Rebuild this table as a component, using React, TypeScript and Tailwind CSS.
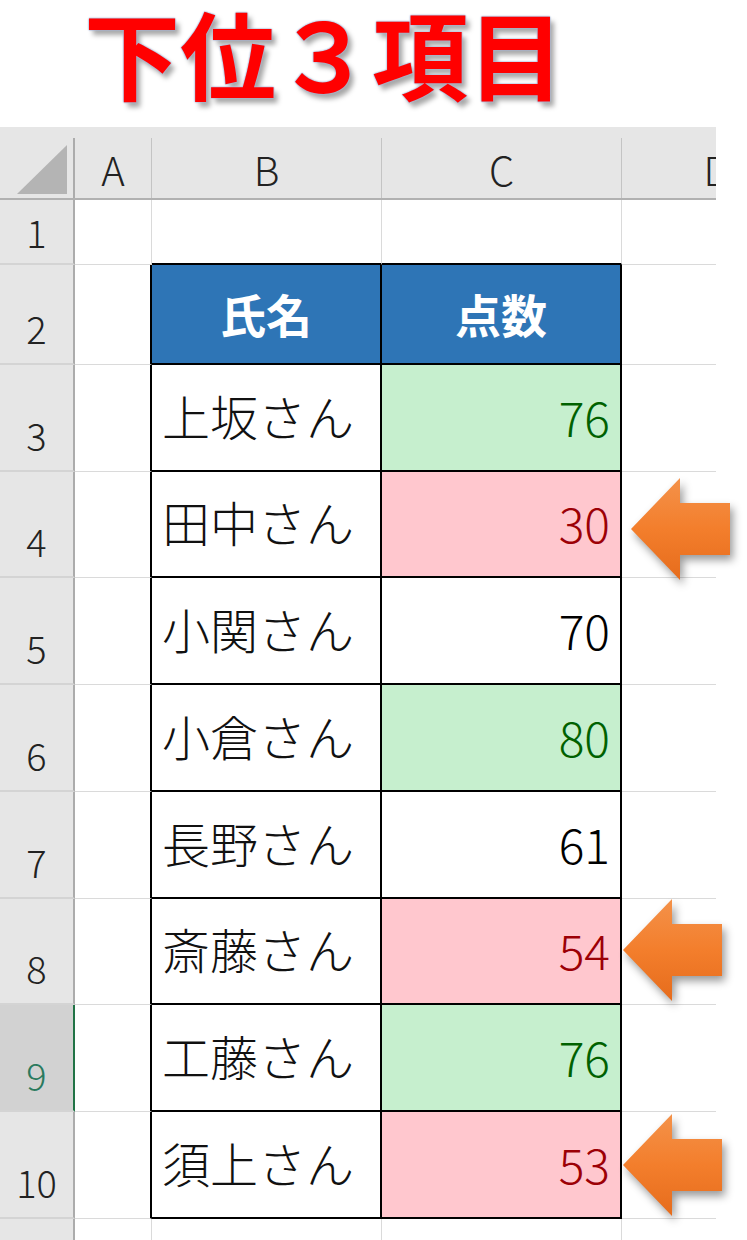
import React from 'react'

type Tone = 'good' | 'bad' | 'none'

type Row = {
  n: number
  h: string
  name?: string
  score?: string
  tone?: Tone
  head?: boolean
  active?: boolean
}

const rows: Row[] = [
  { n: 1, h: 'h-[65px]' },
  { n: 2, h: 'h-[100px]', name: '氏名', score: '点数', head: true },
  { n: 3, h: 'h-[107px]', name: '上坂さん', score: '76', tone: 'good' },
  { n: 4, h: 'h-[106px]', name: '田中さん', score: '30', tone: 'bad' },
  { n: 5, h: 'h-[107px]', name: '小関さん', score: '70', tone: 'none' },
  { n: 6, h: 'h-[107px]', name: '小倉さん', score: '80', tone: 'good' },
  { n: 7, h: 'h-[107px]', name: '長野さん', score: '61', tone: 'none' },
  { n: 8, h: 'h-[106px]', name: '斎藤さん', score: '54', tone: 'bad' },
  { n: 9, h: 'h-[107px]', name: '工藤さん', score: '76', tone: 'good', active: true },
  { n: 10, h: 'h-[107px]', name: '須上さん', score: '53', tone: 'bad' },
]

const toneClass: Record<Tone, string> = {
  good: 'bg-[#c6efce] text-[#006100]',
  bad: 'bg-[#ffc7ce] text-[#9c0006]',
  none: 'bg-white text-black',
}

function Arrow({ className }: { className: string }) {
  return (
    <svg
      width="104"
      height="108"
      viewBox="0 0 104 108"
      className={`absolute ${className} drop-shadow-[3px_5px_4px_rgba(0,0,0,0.4)]`}
    >
      <defs>
        <linearGradient id="arrowFill" x1="0" y1="0" x2="0" y2="1">
          <stop offset="0" stopColor="#f4924a" />
          <stop offset="0.5" stopColor="#f37e2c" />
          <stop offset="1" stopColor="#e66c1c" />
        </linearGradient>
      </defs>
      <path d="M0 51 L49 0 L49 25 L99 25 L99 77 L49 77 L49 102 Z" fill="url(#arrowFill)" />
    </svg>
  )
}

export default function App() {
  return (
    <div className="relative w-[747px] h-[1240px] overflow-hidden bg-white font-['Noto_Sans_CJK_JP',sans-serif]">
      {/* Title */}
      <div className="h-[127px] pl-[84px]">
        <h1 className="text-[96px] leading-[104px] font-bold text-[#ff0000] [text-shadow:0_0_2px_#a9b8d8,0_0_2px_#a9b8d8,0_0_1px_#a9b8d8,4px_5px_5px_rgba(0,0,0,0.35)]">
          下位３項目
        </h1>
      </div>

      {/* Sheet */}
      <div className="w-[716px] overflow-hidden">
        {/* Column header */}
        <div className="bg-[#e6e6e6] pt-[11px] flex h-[73px] border-b-2 border-b-[#b1b1b1] text-[40px] leading-none font-light text-[#222]">
          <div className="w-[75px] shrink-0 border-r-2 border-r-[#acacac] flex items-end justify-end pr-[6px] pb-[4px]">
            <svg width="50" height="49" viewBox="0 0 50 49">
              <path d="M0 49 L50 49 L50 0 Z" fill="#b4b4b4" />
            </svg>
          </div>
          <div className="w-[77px] shrink-0 border-r border-r-[#c4c4c4] flex items-center justify-center pt-[2px]">A</div>
          <div className="w-[230px] shrink-0 border-r border-r-[#c4c4c4] flex items-center justify-center pt-[2px]">B</div>
          <div className="w-[240px] shrink-0 border-r border-r-[#c4c4c4] flex items-center justify-center pt-[2px]">C</div>
          <div className="w-[190px] shrink-0 flex items-center justify-center pt-[2px]">D</div>
        </div>

        {rows.map((r) => {
          const inTable = r.n >= 2
          return (
            <div key={r.n} className={`flex ${r.h}`}>
              <div
                className={`w-[75px] shrink-0 flex justify-center text-[38px] leading-none font-light border-b-2 border-b-[#d4d4d4] ${
                  r.n === 1 ? 'items-center' : 'items-end pb-[16px]'
                } ${
                  r.active
                    ? 'bg-[#d2d2d2] text-[#2a7a5e] border-r-2 border-r-[#217346]'
                    : 'bg-[#e6e6e6] text-[#222] border-r-2 border-r-[#acacac]'
                }`}
              >
                {r.n}
              </div>
              <div
                className={`w-[77px] shrink-0 border-b border-b-[#dadada] ${
                  inTable ? 'border-r-2 border-r-black' : 'border-r border-r-[#dadada]'
                }`}
              />
              <div
                className={`w-[230px] shrink-0 flex items-center ${
                  inTable ? 'border-r-2 border-r-black border-b-2 border-b-black' : 'border-r border-r-[#dadada] border-b-2 border-b-black'
                } ${
                  r.head
                    ? 'bg-[#2e75b6] text-white font-bold text-[46px] justify-center pb-[2px]'
                    : 'bg-white text-[#111] font-light text-[48px] pl-[10px] pb-[6px]'
                }`}
              >
                {r.name}
              </div>
              <div
                className={`w-[240px] shrink-0 flex items-center ${
                  inTable ? 'border-r-2 border-r-black border-b-2 border-b-black' : 'border-r border-r-[#dadada] border-b-2 border-b-black'
                } ${
                  r.head
                    ? 'bg-[#2e75b6] text-white font-bold text-[46px] justify-center pb-[2px]'
                    : r.tone
                      ? `${toneClass[r.tone]} font-light text-[48px] justify-end pr-[10px] pb-[4px]`
                      : ''
                }`}
              >
                {r.score}
              </div>
              <div className="w-[190px] shrink-0 border-b border-b-[#dadada]" />
            </div>
          )
        })}

        {/* Row 11 (cut off) */}
        <div className="flex h-[40px]">
          <div className="w-[75px] shrink-0 bg-[#e6e6e6] border-r-2 border-r-[#acacac] flex justify-center items-start pt-[14px] text-[38px] leading-none font-light text-[#222]">
            11
          </div>
          <div className="w-[77px] shrink-0 border-r border-r-[#dadada]" />
          <div className="w-[230px] shrink-0 border-r border-r-[#dadada]" />
          <div className="w-[240px] shrink-0 border-r border-r-[#dadada]" />
          <div className="w-[190px] shrink-0" />
        </div>
      </div>

      <Arrow className="left-[631px] top-[478px]" />
      <Arrow className="left-[623px] top-[899px]" />
      <Arrow className="left-[623px] top-[1114px]" />
    </div>
  )
}
